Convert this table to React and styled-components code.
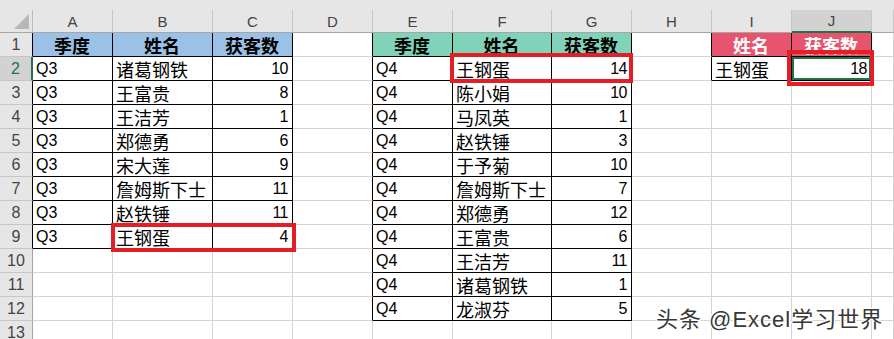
import React from "react";
import styled, { createGlobalStyle } from "styled-components";

const GlobalStyle = createGlobalStyle`
  html, body {
    margin: 0;
    padding: 0;
    background: #ffffff;
    overflow: hidden;
  }
  body {
    font-family: "Liberation Sans", "Noto Sans CJK SC", sans-serif;
  }
`;

const GRID = "#d4d4d4";
const INK = "#000000";
const GREEN = "#217346";

const COLUMNS = [
  { key: "A", w: 80 },
  { key: "B", w: 100 },
  { key: "C", w: 80 },
  { key: "D", w: 80 },
  { key: "E", w: 80 },
  { key: "F", w: 99 },
  { key: "G", w: 80 },
  { key: "H", w: 80 },
  { key: "I", w: 80 },
  { key: "J", w: 80 },
  { key: "K", w: 0 },
];

const TABLES = [
  {
    cols: ["A", "B", "C"],
    fill: "#9bc2e6",
    headColor: "#000",
    head: ["季度", "姓名", "获客数"],
    rows: [
      ["Q3", "诸葛钢铁", 10],
      ["Q3", "王富贵", 8],
      ["Q3", "王洁芳", 1],
      ["Q3", "郑德勇", 6],
      ["Q3", "宋大莲", 9],
      ["Q3", "詹姆斯下士", 11],
      ["Q3", "赵铁锤", 11],
      ["Q3", "王钢蛋", 4],
    ],
  },
  {
    cols: ["E", "F", "G"],
    fill: "#80d3b8",
    headColor: "#000",
    head: ["季度", "姓名", "获客数"],
    rows: [
      ["Q4", "王钢蛋", 14],
      ["Q4", "陈小娟", 10],
      ["Q4", "马凤英", 1],
      ["Q4", "赵铁锤", 3],
      ["Q4", "于予菊", 10],
      ["Q4", "詹姆斯下士", 7],
      ["Q4", "郑德勇", 12],
      ["Q4", "王富贵", 6],
      ["Q4", "王洁芳", 11],
      ["Q4", "诸葛钢铁", 1],
      ["Q4", "龙淑芬", 5],
    ],
  },
  {
    cols: ["I", "J"],
    fill: "#e8546d",
    headColor: "#fff",
    head: ["姓名", "获客数"],
    rows: [["王钢蛋", 18]],
  },
];

// build a lookup of every filled cell: "B4" -> { text, kind, ... }
const cells = {};
TABLES.forEach((t) => {
  t.head.forEach((h, i) => {
    cells[`${t.cols[i]}1`] = { text: h, kind: "head", fill: t.fill, color: t.headColor };
  });
  t.rows.forEach((r, ri) => {
    r.forEach((v, ci) => {
      let kind = "text";
      if (typeof v === "number") kind = "num";
      else if (/[\u4e00-\u9fff]/.test(v)) kind = "name";
      cells[`${t.cols[ci]}${ri + 2}`] = { text: v, kind };
    });
  });
});

const inTable = (col, row) => Boolean(cells[`${col}${row}`]);

const ROW_COUNT = 13;
const SELECTED = { col: "J", row: 2 };

const Sheet = styled.div`
  position: relative;
  width: 894px;
  height: 339px;
  overflow: hidden;
  background: #ffffff;
`;

const TopStrip = styled.div`
  height: 10px;
  background: #e6e6e6;
`;

const Row = styled.div`
  display: flex;
  height: ${(p) => p.$h}px;
`;

const Corner = styled.div`
  box-sizing: border-box;
  width: 33px;
  flex: none;
  background: #e6e6e6;
  border-right: 1px solid #bdbdbd;
  border-bottom: 1px solid #a6a6a6;
  display: flex;
  align-items: flex-end;
  justify-content: flex-end;
  padding: 0 3px 3px 0;
`;

const ColHead = styled.div`
  box-sizing: border-box;
  width: ${(p) => (p.$w ? `${p.$w}px` : "auto")};
  flex: ${(p) => (p.$w ? "none" : "1")};
  background: ${(p) => (p.$sel ? "#d2d2d2" : "#e6e6e6")};
  border-right: 1px solid #c6c6c6;
  border-bottom: ${(p) => (p.$sel ? `2px solid ${GREEN}` : "1px solid #a6a6a6")};
  display: flex;
  align-items: center;
  justify-content: center;
  font-size: 15px;
  color: #444444;
`;

const RowHead = styled.div`
  box-sizing: border-box;
  width: 33px;
  flex: none;
  background: ${(p) => (p.$sel ? "#d2d2d2" : "#e6e6e6")};
  border-bottom: 1px solid #c6c6c6;
  border-right: ${(p) => (p.$sel ? `2px solid ${GREEN}` : `1px solid ${p.$edge}`)};
  display: flex;
  align-items: center;
  justify-content: center;
  font-size: 16px;
  color: ${(p) => (p.$sel ? GREEN : "#444444")};
  padding-top: 1px;
`;

const Cell = styled.div`
  position: relative;
  box-sizing: border-box;
  width: ${(p) => (p.$w ? `${p.$w}px` : "auto")};
  flex: ${(p) => (p.$w ? "none" : "1")};
  display: flex;
  align-items: center;
  justify-content: ${(p) =>
    p.$kind === "num" ? "flex-end" : p.$kind === "head" ? "center" : "flex-start"};
  padding: 1px 4px 0 3px;
  border-right: 1px solid ${(p) => p.$rb};
  border-bottom: 1px solid ${(p) => p.$bb};
  background: ${(p) => p.$fill || "#ffffff"};
  color: ${(p) => p.$color || "#000000"};
  font-family: ${(p) =>
    p.$kind === "name" || p.$kind === "head"
      ? `"Noto Sans CJK SC", sans-serif`
      : `"Liberation Sans", "Noto Sans CJK SC", sans-serif`};
  font-size: ${(p) => (p.$kind === "name" || p.$kind === "head" ? "18px" : "16px")};
  letter-spacing: ${(p) => (p.$kind === "num" ? "-0.5px" : "0")};
  font-weight: ${(p) => (p.$kind === "head" ? 700 : 400)};
  white-space: nowrap;
  overflow: visible;
  box-shadow: ${(p) => (p.$sel ? `inset 0 0 0 2px ${GREEN}` : "none")};
`;

const Mark = styled.div`
  position: absolute;
  left: ${(p) => p.$x}px;
  top: ${(p) => p.$y}px;
  width: ${(p) => p.$w}px;
  height: ${(p) => p.$h}px;
  box-sizing: border-box;
  border: 4px solid #e31e25;
  pointer-events: none;
`;

const Watermark = styled.div`
  position: absolute;
  left: 656px;
  top: 301px;
  font-family: "Liberation Sans", "Noto Sans CJK SC", sans-serif;
  font-size: 22px;
  letter-spacing: 1px;
  color: #383838;
  white-space: nowrap;
  text-shadow: 1px 0 0 #fff, -1px 0 0 #fff, 0 1px 0 #fff, 0 -1px 0 #fff,
    1px 1px 0 #fff, -1px -1px 0 #fff, 1px -1px 0 #fff, -1px 1px 0 #fff;
`;

const CornerTriangle = () => (
  <svg width="15" height="15" viewBox="0 0 15 15">
    <polygon points="15,0 15,15 0,15" fill="#b7b7b7" />
  </svg>
);

const nextCol = (i) => (COLUMNS[i + 1] ? COLUMNS[i + 1].key : null);

const SheetRow = ({ row }) => (
  <Row $h={24}>
    <RowHead
      $sel={row === SELECTED.row}
      $edge={inTable("A", row) ? INK : "#a6a6a6"}
    >
      {row}
    </RowHead>
    {COLUMNS.map((c, i) => {
      const cell = cells[`${c.key}${row}`];
      const mine = inTable(c.key, row);
      const rb = mine || inTable(nextCol(i), row) ? INK : GRID;
      const bb = mine || inTable(c.key, row + 1) ? INK : GRID;
      return (
        <Cell
          key={c.key}
          $w={c.w}
          $rb={rb}
          $bb={bb}
          $kind={cell ? cell.kind : "text"}
          $fill={cell && cell.fill}
          $color={cell && cell.color}
          $sel={c.key === SELECTED.col && row === SELECTED.row}
        >
          {cell ? cell.text : ""}
        </Cell>
      );
    })}
  </Row>
);

export default function App() {
  const rows = Array.from({ length: ROW_COUNT }, (_, i) => i + 1);
  return (
    <>
      <GlobalStyle />
      <Sheet>
        <TopStrip />
        <Row $h={23}>
          <Corner>
            <CornerTriangle />
          </Corner>
          {COLUMNS.map((c) => (
            <ColHead key={c.key} $w={c.w} $sel={c.key === SELECTED.col}>
              {c.key === "K" ? "" : c.key}
            </ColHead>
          ))}
        </Row>
        {rows.map((r) => (
          <SheetRow key={r} row={r} />
        ))}
        <Mark $x={450} $y={53} $w={183} $h={30} />
        <Mark $x={111} $y={223} $w={185} $h={29} />
        <Mark $x={787} $y={50} $w={87} $h={36} />
        <Watermark>头条 @Excel学习世界</Watermark>
      </Sheet>
    </>
  );
}
